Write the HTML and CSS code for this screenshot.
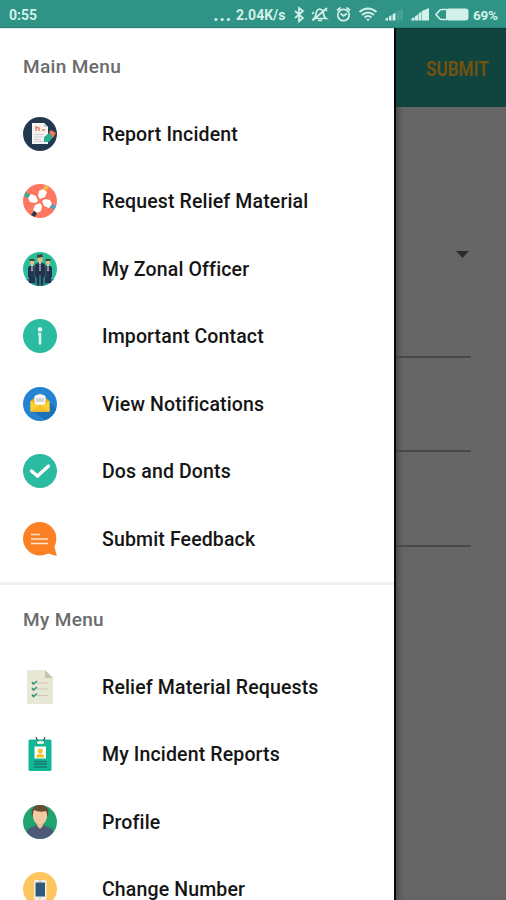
FILE: index.html
```html
<!DOCTYPE html>
<html lang="en">
<head>
<meta charset="utf-8">
<title>Main Menu</title>
<link rel="stylesheet" href="styles.css">
</head>
<body>
<div class="screen">
  <header class="status">
    <span class="clock">0:55</span>
    <span class="dots">...</span>
    <span class="speed">2.04K/s</span>
    <svg class="status-icons" width="177" height="28" viewBox="292 0 177 28" fill="none" stroke="#d3f0e9" stroke-width="1.7">
      <path d="M295 11l8 7-4 3.500V8l4 3-8 7"/>
      <path d="M314 18.500c2.500-2 1.500-6 3-8 2-2 4-1.500 5.500 0 2 2 0 6 3.500 8zM318 20.500h4M312.500 20.500L327 8M325 9l2 2M314 12l-2 2"/>
      <circle cx="343.500" cy="15" r="5.700"/><path d="M340.500 13.500l3 2.500 3.500-2.500M337 10.500l3.500-3M350 10.500l-3.500-3"/>
      <path d="M359.500 12q8.500-7 17 0M362 15q6-5 12 0M364.500 17.500q3.500-3 7 0" stroke-width="2.100"/><path d="M366 19h4l-2 2z" fill="#d3f0e9" stroke="none"/>
      <g stroke="none" fill="#d3f0e9"><path d="M385.500 20.500v-2l2.500-1v3zM389 20.500v-4l2.500-1.500v5.500zM392.500 20.500v-6l3-2v8z"/><path d="M397 20.500v-9l2.500-1.500v10.500zM400.500 20.500V10l2-1v11.500z" opacity=".2"/><path d="M411.500 20.500v-2l3-1.500v3.500zM415 20.500v-4l3-2v6zM418.500 20.500v-7l3-2v9zM422 20.500V11l7-3v12.500z"/></g>
      <path d="M447 9.500h-5q-1.500 0-2.500 1l-3.500 4 3.500 4q1 1 2.500 1h5"/><rect x="446" y="8.500" width="22.500" height="12" rx="3" fill="#d3f0e9" stroke="none"/>
    </svg>
    <span class="percent">69%</span>
  </header>
  <div class="content">
    <nav class="drawer">
      <h2 class="heading">Main Menu</h2>
      <ul class="menu">
        <li class="item"><svg class="icon" viewBox="0 0 34 34"><circle cx="17" cy="17" r="17" fill="#22384f"/><path d="M9 6h12l4 4v17H9z" fill="#f5f3f2"/><path d="M21 6v4h4z" fill="#cbd0d3"/><path d="M13 14v-4l3 1v3m3-1h3" fill="none" stroke="#f07864" stroke-width="1.500"/><path d="M11 17.500h10M11 20h9M11 22.500h7M11 24.500h11" stroke="#c5c9cf" stroke-width=".9"/><path d="M21 20l5-4 5 3-5 6h-5z" fill="#29ad91"/><path d="M26 15l2-2 5 3-3 5z" fill="#ef745e"/></svg><span>Report Incident</span></li>
        <li class="item"><svg class="icon" viewBox="0 0 34 34"><circle cx="17" cy="17" r="17" fill="#fc7861"/><path d="M20 5l4 3-2 5-5 2-2-3 1-5z" fill="#fff"/><path d="M22 1l4 2-3 4-3-2z" fill="#f6bd4d"/><g transform="rotate(90 17 17)"><path d="M20 5l4 3-2 5-5 2-2-3 1-5z" fill="#fff"/><path d="M22 1l4 2-3 4-3-2z" fill="#49a7cb"/></g><g transform="rotate(180 17 17)"><path d="M20 5l4 3-2 5-5 2-2-3 1-5z" fill="#fff"/><path d="M22 1l4 2-3 4-3-2z" fill="#26384d"/></g><g transform="rotate(270 17 17)"><path d="M20 5l4 3-2 5-5 2-2-3 1-5z" fill="#fff"/><path d="M22 1l4 2-3 4-3-2z" fill="#28b894"/></g></svg><span>Request Relief Material</span></li>
        <li class="item"><svg class="icon" viewBox="0 0 34 34"><circle cx="17" cy="17" r="17" fill="#28bd9b"/><path d="M3 27h28q-5 7-14 7T3 27" fill="#178b7c"/><g fill="#25314f"><path d="M5 15l4-2 4 2 1 10-2 1v5H6v-5l-1-1zM21 15l4-2 4 2v10l-1 1v5h-6v-5l-2-1z"/><path d="M12 12l5-2 5 2 1 12-2 1-1 9h-6l-1-9-2-1z" stroke="#249d8b" stroke-width=".5"/></g><path d="M17 23v11" stroke="#35b39c"/><g fill="#e5bd83"><path d="M7 8h4v4l-2 2-2-2zM23 8h4v4l-2 2-2-2zM14.500 4h5v5L17 12l-2.500-3z"/></g><path d="M6.500 9V7h5v2zM22.500 9V7h5v2zM14 6V3l5-1 1 3z" fill="#493e37"/><path d="M9 13v6M25 13v6M17 11v8" stroke="#e9f2ef" stroke-width="1.500"/><path d="M9 14v4M25 14v4M17 12v7" stroke="#25314f" stroke-width=".7"/></svg><span>My Zonal Officer</span></li>
        <li class="item"><svg class="icon" viewBox="0 0 34 34"><circle cx="17" cy="17" r="17" fill="#2bbba0"/><circle cx="17" cy="10.500" r="2.300" fill="#e3f8f3"/><path d="M15 15h2V25.500" fill="none" stroke="#d5f5ed" stroke-width="2.600"/></svg><span>Important Contact</span></li>
        <li class="item"><svg class="icon" viewBox="0 0 34 34"><circle cx="17" cy="17" r="17" fill="#2484d1"/><path d="M26 14l7 8q-3 9-11 11L9 24z" fill="#1c71b7"/><path d="M7.500 14L17 6.500l9.500 7.500v10.500h-19z" fill="#edae23"/><path d="M11.500 9q5.500-3.500 11 0v9h-11z" fill="#faf9f5"/><path d="M13 12h8M13 14h8" stroke="#a9b1bd" stroke-width="1"/><path d="M7.500 14l9.500 5.500 9.500-5.500v10.500h-19z" fill="#fbd233"/><path d="M7.500 24.500L17 18.500l9.500 6z" fill="#f5bd28"/></svg><span>View Notifications</span></li>
        <li class="item"><svg class="icon" viewBox="0 0 34 34"><circle cx="17" cy="17" r="17" fill="#2bbba0"/><path d="M8.500 17l6 5L25.500 12" fill="none" stroke="#fff" stroke-width="3.300" stroke-linecap="round"/></svg><span>Dos and Donts</span></li>
        <li class="item"><svg class="icon" viewBox="0 0 34 34"><circle cx="16.700" cy="16.700" r="16.700" fill="#fc8125"/><path d="M31 23l2.800 11-13.800-4z" fill="#fc8125"/><path d="M8 12.500h9M8 17h17M8 21.500h17" stroke="#ffe7cf" stroke-width="1.600"/></svg><span>Submit Feedback</span></li>
      </ul>
      <hr class="divider">
      <h2 class="heading second">My Menu</h2>
      <ul class="menu">
        <li class="item"><svg class="icon" viewBox="0 0 34 34"><path d="M4 0h18l8 8v26H4z" fill="#e9e7d6"/><path d="M22 0v8h8z" fill="#c8c5ac"/><path d="M14 13h12M14 19h11M14 25.500h11" stroke="#cecbb5" stroke-width="1.200"/><path d="M9 12l1.500 2L14 11M9 18l1.500 2 3.500-3M9 24.500l1.500 2 3.500-3" fill="none" stroke="#369276" stroke-width="1.600"/></svg><span>Relief Material Requests</span></li>
        <li class="item"><svg class="icon" viewBox="0 0 34 34"><rect x="5.500" y="2.500" width="23" height="31.500" rx="1.500" fill="#12b796"/><path d="M13 0l2 5h5l2-5" fill="none" stroke="#485863" stroke-width="1.300"/><rect x="14" y="4" width="7" height="3" rx="1" fill="#d7eee8"/><path d="M11.500 9.500h11.500v12h-11.500z" fill="#fff"/><circle cx="17.300" cy="14" r="2.500" fill="#f2c329"/><path d="M13.500 20.500v-2.500q3.800-2 7.500 0v2.500z" fill="#f2c329"/><path d="M11 24.500h13M11 27h13M11 30h13" stroke="#177c73" stroke-width="1.400"/></svg><span>My Incident Reports</span></li>
        <li class="item"><svg class="icon" viewBox="0 0 34 34"><circle cx="17" cy="17" r="17" fill="#20a271"/><path d="M3.500 27q1-4 6-5l5-2h5l5 2q5 1 6 5-5 7-13.500 7T3.500 27" fill="#4c5978"/><path d="M14 15h6v6l-3 3-3-3z" fill="#e9bc91"/><path d="M10 5h14v6q0 5-4 8-3 1-6 0-4-3-4-8z" fill="#f2cba3"/><path d="M9 12L8.500 5 12 1q5-2 10 0l3.500 4-.5 7-2-6q-6 2-12-1z" fill="#674d35"/></svg><span>Profile</span></li>
        <li class="item"><svg class="icon" viewBox="0 0 34 34"><circle cx="17" cy="17" r="17" fill="#fdc65e"/><rect x="11" y="8" width="12.500" height="20" rx="1.500" fill="#f4f0e8"/><path d="M12.500 10.500h9.500v14h-9.500z" fill="#305a7a"/><path d="M15.500 9.300h3M16 26.300h2" stroke="#a6a7a5" stroke-width=".8"/></svg><span>Change Number</span></li>
      </ul>
    </nav>
    <main class="page">
      <div class="toolbar"><span class="submit">SUBMIT</span></div>
      <div class="form">
        <div class="field select"><i class="caret"></i></div>
        <div class="field"></div>
        <div class="field last"></div>
      </div>
    </main>
  </div>
</div>
</body>
</html>
```

FILE: styles.css
```css
* { box-sizing: border-box; }
body { margin: 0; font-family: Roboto, sans-serif; }
.screen { width: 506px; height: 900px; overflow: hidden; display: flex; flex-direction: column; }
.status {
  height: 28px; flex: none; display: flex; align-items: center;
  background: #2f9386; color: #d3f0e9; border-bottom: 1px solid #24877a;
  font-size: 14px; font-weight: 700; white-space: nowrap;
}
.clock { width: 204px; padding-left: 9px; padding-top: 2px; }
.dots { width: 32px; padding-left: 9px; font-size: 20px; letter-spacing: .5px; }
.speed { width: 56px; padding-top: 2px; font-size: 14px; }
.status-icons { flex: none; }
.percent { padding-left: 4px; padding-top: 2px; font-size: 13.5px; letter-spacing: -.2px; }
.content { flex: 1; min-height: 0; display: flex; }
.drawer { width: 394px; flex: none; overflow: hidden; background: #fff; border-top: 1px solid #e5e9e8; }
.heading {
  margin: 0; height: 70.750px; padding: 4px 0 0 23px; display: flex; align-items: center;
  font-size: 19px; font-weight: 500; letter-spacing: .35px; color: #6b6b6b;
}
.menu { list-style: none; margin: 0; padding: 0; }
.item {
  height: 67.500px; padding-left: 23px; display: flex; align-items: center; gap: 45px;
  font-size: 19.500px; font-weight: 500; letter-spacing: .14px; color: #151515; white-space: nowrap;
}
.item span { padding-top: 1px; }
.icon { width: 34px; height: 34px; flex: none; }
.divider { height: 3px; margin: 9.500px 0 0; border: 0; background: #f0f0f0; }
.second { height: 68px; padding-top: 2px; }
.page {
  flex: 1; display: flex; flex-direction: column; background: #666;
  border-left: 2px solid #080808; box-shadow: inset 7px 0 7px -5px #444;
}
.toolbar {
  height: 79px; display: flex; align-items: center; justify-content: flex-end; padding: 2px 17px 0 0;
  background: #10443e; border-top: 1px solid #0b3833; color: #725111;
  font-size: 20px; font-weight: 700;
}
.submit { transform: scaleX(.85); transform-origin: right; }
.form { padding-right: 35px; }
.field { height: 94px; border-bottom: 2px solid #484848; }
.select { height: 251px; padding: 144px 2px 0 0; display: flex; justify-content: flex-end; }
.caret { width: 13px; height: 7px; background: #2c2c2c; clip-path: polygon(0 0, 100% 0, 50% 100%); }
.last { height: 95px; }
```
